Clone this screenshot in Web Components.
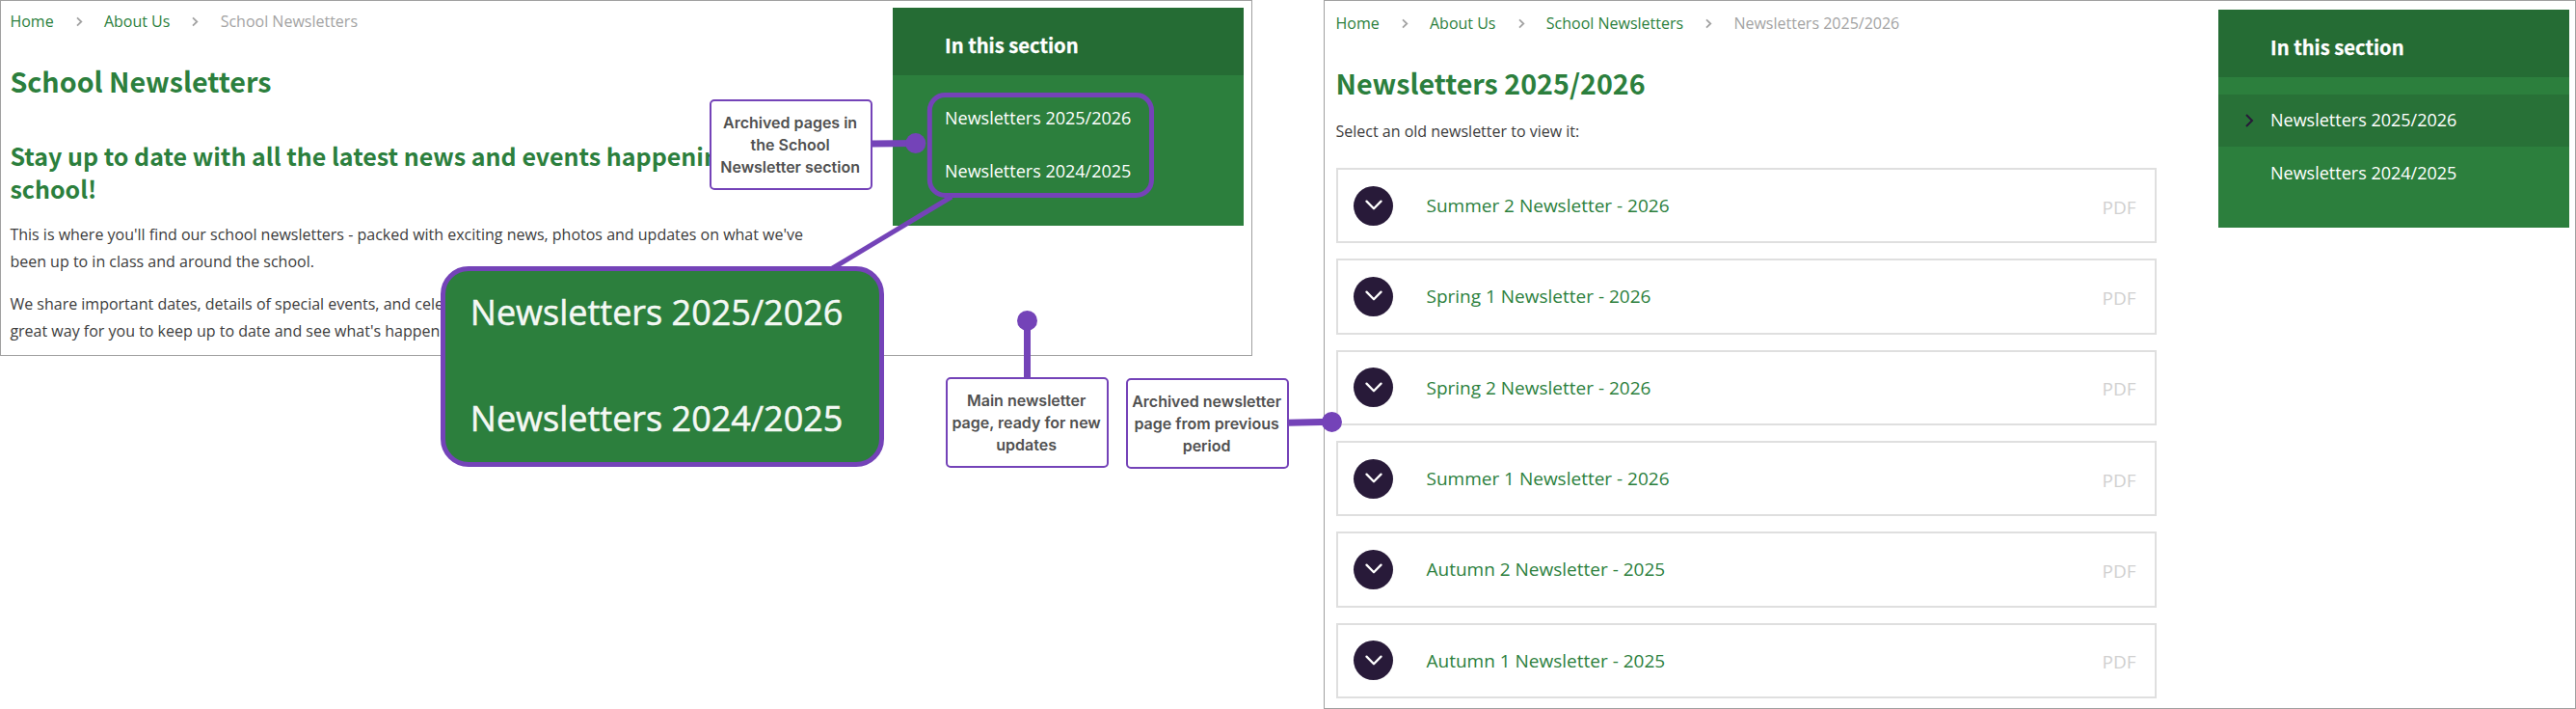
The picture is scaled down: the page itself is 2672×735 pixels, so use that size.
<!DOCTYPE html>
<html lang="en">
<head>
<meta charset="utf-8">
<title>School Newsletters</title>
<style>
html, body { margin: 0; background: #fff; }
body { width: 2672px; height: 735px; overflow: hidden; font-family: "Open Sans", sans-serif; font-size: 16px; color: #3c3c3c; }
</style>
</head>
<body>
<newsletter-guide></newsletter-guide>

<template id="t-guide">
  <style>
    :host { display: flex; position: relative; align-items: flex-start; justify-content: space-between; width: 2672px; height: 735px; }
    .first { width: 1299px; height: 369px; --top: 9px; --side-top: 7px; --side-right: 8px; --side-width: 364px; --left: 9.4px; }
    .second { width: 1299px; height: 735px; --top: 11px; --side-top: 9px; --side-right: 6px; --side-width: 364px; --left: 12px; }
    .first page-title { margin-top: 29px; }
    .second page-title { margin-top: 29px; }
    .second page-crumbs, .second page-title, .second p { margin-left: -.5px; }
    h2 { margin: 40px 0 17px; font: 700 25px/34px "Noto Sans CJK SC", sans-serif; color: #2c7f3d; }
    p { margin: 0 0 16px; line-height: 28px; white-space: nowrap; }
    .second p { margin-top: 16px; margin-bottom: 24px; }
    .files { display: grid; row-gap: 16.15px; width: 851px; }
    site-callout, zoom-box, .marks { position: absolute; }
    .marks { left: 0; top: 0; }
  </style>
  <page-panel class="first">
    <page-crumbs trail="Home|About Us|School Newsletters"></page-crumbs>
    <page-title>School Newsletters</page-title>
    <h2>Stay up to date with all the latest news and events happening<br>school!</h2>
    <p>This is where you'll find our school newsletters - packed with exciting news, photos and updates on what we've<br>been up to in class and around the school.</p>
    <p>We share important dates, details of special events, and celebrate<br>great way for you to keep up to date and see what's happening</p>
    <section-nav slot="side">
      <nav-link>Newsletters 2025/2026</nav-link>
      <nav-link>Newsletters 2024/2025</nav-link>
    </section-nav>
  </page-panel>
  <page-panel class="second">
    <page-crumbs trail="Home|About Us|School Newsletters|Newsletters 2025/2026"></page-crumbs>
    <page-title>Newsletters 2025/2026</page-title>
    <p>Select an old newsletter to view it:</p>
    <div class="files">
      <file-row>Summer 2 Newsletter - 2026</file-row>
      <file-row>Spring 1 Newsletter - 2026</file-row>
      <file-row>Spring 2 Newsletter - 2026</file-row>
      <file-row>Summer 1 Newsletter - 2026</file-row>
      <file-row>Autumn 2 Newsletter - 2025</file-row>
      <file-row>Autumn 1 Newsletter - 2025</file-row>
    </div>
    <section-nav slot="side">
      <nav-link active>Newsletters 2025/2026</nav-link>
      <nav-link>Newsletters 2024/2025</nav-link>
    </section-nav>
  </page-panel>

  <svg class="marks" width="2672" height="735" viewBox="0 0 2672 735" fill="none" stroke="#7443b8">
    <rect x="964.3" y="98.5" width="230.2" height="104" rx="16" stroke-width="5"/>
    <path d="M987 204L862 279" stroke-width="5"/>
    <path d="M904 149L950 148.5M1065.5 392V332M1336 438.3L1381 437.3" stroke-width="7"/>
    <g fill="#7443b8" stroke="none"><circle cx="949.8" cy="148.6" r="10.5"/><circle cx="1065.5" cy="332.4" r="10.5"/><circle cx="1381.5" cy="437.4" r="10.5"/></g>
  </svg>
  <zoom-box style="left:457px;top:276px"><div>Newsletters 2025/2026</div><div>Newsletters 2024/2025</div></zoom-box>
  <site-callout style="left:736px;top:103px">Archived pages in<br>the School<br>Newsletter section</site-callout>
  <site-callout style="left:981px;top:391px">Main newsletter<br>page, ready for new<br>updates</site-callout>
  <site-callout style="left:1168px;top:392px">Archived newsletter<br>page from previous<br>period</site-callout>
</template>

<template id="t-panel">
  <style>
    :host { display: grid; grid-template-columns: 1fr var(--side-width); box-sizing: border-box; border: 1px solid #a0a0a0; background: #fff; padding-right: var(--side-right); }
    main { padding: var(--top) 0 0 var(--left); min-width: 0; }
    aside { padding-top: var(--side-top); }
  </style>
  <main><slot></slot></main><aside><slot name="side"></slot></aside>
</template>

<template id="t-title">
  <style>
    :host { display: block; }
    h1 { margin: 0; font: 700 28.67px/41px "Noto Sans CJK SC", sans-serif; color: #2c7f3d; }
  </style>
  <h1><slot></slot></h1>
</template>

<template id="t-nav">
  <style>
    :host { display: block; height: 226px; background: #2c7f3d; color: #fff; }
    header { box-sizing: border-box; height: 70px; padding: 24px 0 0 54px; background: #256c34; font: 700 20.2px/29px "Noto Sans CJK SC", sans-serif; -webkit-text-stroke: .25px #fff; }
    nav { display: grid; row-gap: 1px; padding-top: 18px; }
  </style>
  <header>In this section</header>
  <nav><slot></slot></nav>
</template>

<template id="t-link">
  <style>
    :host { display: grid; grid-template-columns: 28px 26px 1fr; align-items: center; box-sizing: border-box; height: 54px; padding-bottom: 2px; font-size: 18px; line-height: 24px; }
    :host([active]) { background: #287137; }
    svg { display: none; grid-column: 2; margin-top: 2px; }
    :host([active]) svg { display: block; }
    span { grid-column: 3; grid-row: 1; }
  </style>
  <svg width="9" height="14" viewBox="0 0 9 14" fill="none" stroke="#281a39" stroke-width="2"><path d="M1 1L7 7L1 13"/></svg>
  <span><slot></slot></span>
</template>

<template id="t-row">
  <style>
    :host { display: flex; align-items: center; box-sizing: border-box; height: 78.2px; border: 2px solid #dfdfdf; padding: 0 19.4px 0 16px; font-size: 19px; line-height: 26px; }
    i { display: grid; place-items: center; width: 41px; height: 41px; border-radius: 50%; background: #281a39; margin-right: 34.5px; }
    .name { flex: 1; color: #2c7f3d; }
    .kind { color: #d0d0d0; padding-top: 3px; }
  </style>
  <i><svg width="20" height="12" viewBox="0 0 20 12" fill="none" stroke="#fff" stroke-width="2.3" stroke-linecap="round" stroke-linejoin="round"><path d="M2.5 1.6L10 9.2L17.5 1.6"/></svg></i>
  <span class="name"><slot></slot></span><span class="kind">PDF</span>
</template>

<template id="t-callout">
  <style>
    :host { display: block; box-sizing: border-box; width: 169px; height: 94px; border: 2px solid #7443b8; border-radius: 5px; background: #fff; color: #505050; padding: 10.5px 1.8px 0 0; text-align: center; font: 600 16px/23px Inter, sans-serif; white-space: nowrap; }
  </style>
  <slot></slot>
</template>

<template id="t-zoom">
  <style>
    :host { display: grid; align-content: start; row-gap: 61px; box-sizing: border-box; width: 460px; height: 208px; border: 5px solid #7443b8; border-radius: 29px; background: #2c7f3d; color: #f4f8f4; padding: 18px 0 0 25.8px; font-size: 36px; line-height: 49px; -webkit-text-stroke: .5px #f4f8f4; }
  </style>
  <slot></slot>
</template>

<script>
const define = (name, id) => customElements.define(name, class extends HTMLElement {
  constructor() {
    super();
    this.attachShadow({ mode: 'open' }).append(document.getElementById(id).content.cloneNode(true));
  }
});

class PageCrumbs extends HTMLElement {
  connectedCallback() {
    const root = this.shadowRoot || this.attachShadow({ mode: 'open' });
    const parts = this.getAttribute('trail').split('|');
    const arrow = '<svg width="7" height="11" viewBox="0 0 7 11" fill="none" stroke="#a3a3a3" stroke-width="1.8"><path d="M1 1.3L5.3 5.5L1 9.7"/></svg>';
    root.innerHTML = `<style>
      :host { display: flex; align-items: center; height: 24px; line-height: 24px; white-space: nowrap; color: #a3a3a3; }
      a { color: #2c7f3d; }
      svg { margin: 1.5px 22.2px 0 23.1px; flex: none; }
    </style>` + parts.map((p, i) => i < parts.length - 1 ? `<a>${p}</a>${arrow}` : `<span>${p}</span>`).join('');
  }
}

customElements.define('page-crumbs', PageCrumbs);
define('page-title', 't-title');
define('nav-link', 't-link');
define('section-nav', 't-nav');
define('file-row', 't-row');
define('site-callout', 't-callout');
define('zoom-box', 't-zoom');
define('page-panel', 't-panel');
define('newsletter-guide', 't-guide');
</script>
</body>
</html>
